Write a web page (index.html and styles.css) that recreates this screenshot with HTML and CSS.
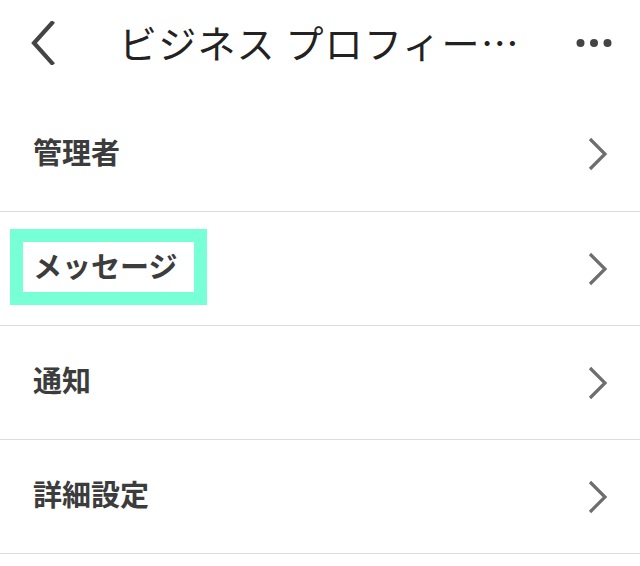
FILE: index.html
```html
<!DOCTYPE html>
<html lang="ja">
<head>
<meta charset="utf-8">
<link rel="stylesheet" href="styles.css">
</head>
<body>
<div class="screen">
  <header class="nav">
    <svg class="back" width="30" height="44" viewBox="0 0 30 44"><path d="M24 2 L6 22 L24 42" fill="none" stroke="#444" stroke-width="4.2" stroke-linecap="square"/></svg>
    <div class="title">ビジネス プロフィー…</div>
    <svg class="more" width="36" height="10" viewBox="0 0 36 10"><circle cx="4.5" cy="5" r="4" fill="#444"/><circle cx="18" cy="5" r="4" fill="#444"/><circle cx="31.5" cy="5" r="4" fill="#444"/></svg>
  </header>
  <ul class="list">
    <li class="row"><span class="label">管理者</span><svg class="chev" width="20" height="34" viewBox="0 0 20 34"><path d="M2 2 L17 17 L2 32" fill="none" stroke="#6e6e6e" stroke-width="3.2"/></svg></li>
    <li class="row"><span class="label highlight">メッセージ</span><svg class="chev" width="20" height="34" viewBox="0 0 20 34"><path d="M2 2 L17 17 L2 32" fill="none" stroke="#6e6e6e" stroke-width="3.2"/></svg></li>
    <li class="row"><span class="label">通知</span><svg class="chev" width="20" height="34" viewBox="0 0 20 34"><path d="M2 2 L17 17 L2 32" fill="none" stroke="#6e6e6e" stroke-width="3.2"/></svg></li>
    <li class="row"><span class="label">詳細設定</span><svg class="chev" width="20" height="34" viewBox="0 0 20 34"><path d="M2 2 L17 17 L2 32" fill="none" stroke="#6e6e6e" stroke-width="3.2"/></svg></li>
  </ul>
</div>
</body>
</html>
```
FILE: styles.css
```css
* { box-sizing: border-box; }
html, body { margin: 0; padding: 0; background: #fff; }
body { font-family: "Noto Sans CJK JP", "Noto Sans", sans-serif; width: 640px; height: 566px; overflow: hidden; }
.nav {
  height: 97px;
  display: flex;
  align-items: center;
  padding: 0 28px 0 28px;
}
.back { flex: none; margin-top: -12px; }
.title {
  flex: 1;
  margin-left: 61px;
  margin-top: -14px;
  font-size: 38px;
  font-weight: 400;
  color: #222;
  white-space: nowrap;
  letter-spacing: 1.2px;
}
.more { flex: none; margin-top: -12px; }
.list { list-style: none; margin: 0; padding: 0; }
.row {
  height: 114px;
  border-bottom: 1px solid #dcdcdc;
  display: flex;
  align-items: center;
  justify-content: space-between;
  padding: 0 32px 6px 33px;
}
.row:first-child { height: 115px; }
.label {
  font-size: 29px;
  font-weight: 700;
  color: #3c3c3c;
  line-height: 1.2;
}
.highlight { position: relative; }
.highlight::before {
  content: "";
  position: absolute;
  left: -23px;
  right: -30px;
  top: -19px;
  bottom: -22px;
  border: 13px solid #77ffd5;
}
.chev { flex: none; margin-top: 6px; }
```
